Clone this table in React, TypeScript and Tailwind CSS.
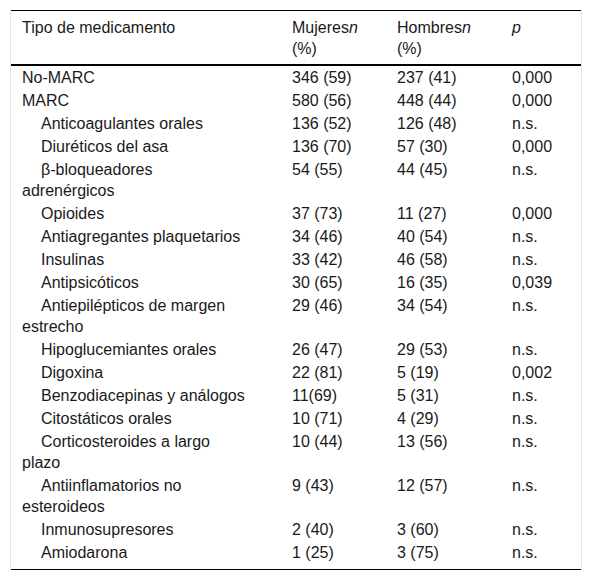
import React from "react";

type Row = { name: string; sub?: boolean; m: string; h: string; p: string };

const rows: Row[] = [
  { name: "No-MARC", m: "346 (59)", h: "237 (41)", p: "0,000" },
  { name: "MARC", m: "580 (56)", h: "448 (44)", p: "0,000" },
  { name: "Anticoagulantes orales", sub: true, m: "136 (52)", h: "126 (48)", p: "n.s." },
  { name: "Diuréticos del asa", sub: true, m: "136 (70)", h: "57 (30)", p: "0,000" },
  { name: "β-bloqueadores adrenérgicos", sub: true, m: "54 (55)", h: "44 (45)", p: "n.s." },
  { name: "Opioides", sub: true, m: "37 (73)", h: "11 (27)", p: "0,000" },
  { name: "Antiagregantes plaquetarios", sub: true, m: "34 (46)", h: "40 (54)", p: "n.s." },
  { name: "Insulinas", sub: true, m: "33 (42)", h: "46 (58)", p: "n.s." },
  { name: "Antipsicóticos", sub: true, m: "30 (65)", h: "16 (35)", p: "0,039" },
  { name: "Antiepilépticos de margen estrecho", sub: true, m: "29 (46)", h: "34 (54)", p: "n.s." },
  { name: "Hipoglucemiantes orales", sub: true, m: "26 (47)", h: "29 (53)", p: "n.s." },
  { name: "Digoxina", sub: true, m: "22 (81)", h: "5 (19)", p: "0,002" },
  { name: "Benzodiacepinas y análogos", sub: true, m: "11(69)", h: "5 (31)", p: "n.s." },
  { name: "Citostáticos orales", sub: true, m: "10 (71)", h: "4 (29)", p: "n.s." },
  { name: "Corticosteroides a largo plazo", sub: true, m: "10 (44)", h: "13 (56)", p: "n.s." },
  { name: "Antiinflamatorios no esteroideos", sub: true, m: "9 (43)", h: "12 (57)", p: "n.s." },
  { name: "Inmunosupresores", sub: true, m: "2 (40)", h: "3 (60)", p: "n.s." },
  { name: "Amiodarona", sub: true, m: "1 (25)", h: "3 (75)", p: "n.s." },
];

export default function App() {
  return (
    <div
      className="bg-white w-[592px] h-[581px] pt-[10px] text-[16px] leading-[21px] text-[#1a1a1a]"
      style={{ fontFamily: '"Liberation Sans", Arial, sans-serif' }}
    >
      <div className="ml-[10px] w-[572px] border-x border-[#e4e4e4] pb-[1px]">
        <table className="table-fixed w-[570px] border-collapse">
          <colgroup>
            <col className="w-[270px]" />
            <col className="w-[105px]" />
            <col className="w-[115px]" />
            <col className="w-[80px]" />
          </colgroup>
          <thead>
            <tr className="border-t border-black border-b-2 border-b-black align-top text-left">
              <th className="font-normal pl-[11px] pr-[34px] pt-[6px] pb-[5px]">Tipo de medicamento</th>
              <th className="font-normal pl-[11px] pr-[25px] pt-[6px] pb-[5px]">
                Mujeres<i>n</i> (%)
              </th>
              <th className="font-normal pl-[11px] pr-[25px] pt-[6px] pb-[5px]">
                Hombres<i>n</i> (%)
              </th>
              <th className="font-normal pl-[11px] pt-[6px] pb-[5px]">
                <i>p</i>
              </th>
            </tr>
          </thead>
          <tbody className="border-b border-black">
            {rows.map((r, i) => {
              const last = i === rows.length - 1;
              const py = last ? "pt-[1px] pb-[6px]" : "py-[1px]";
              return (
                <tr key={i} className="align-top">
                  <td className={`pl-[11px] pr-[34px] ${py} ${r.sub ? "indent-[19px]" : ""}`}>{r.name}</td>
                  <td className={`pl-[11px] pr-[25px] ${py}`}>{r.m}</td>
                  <td className={`pl-[11px] pr-[25px] ${py}`}>{r.h}</td>
                  <td className={`pl-[11px] ${py}`}>{r.p}</td>
                </tr>
              );
            })}
          </tbody>
        </table>
      </div>
    </div>
  );
}
